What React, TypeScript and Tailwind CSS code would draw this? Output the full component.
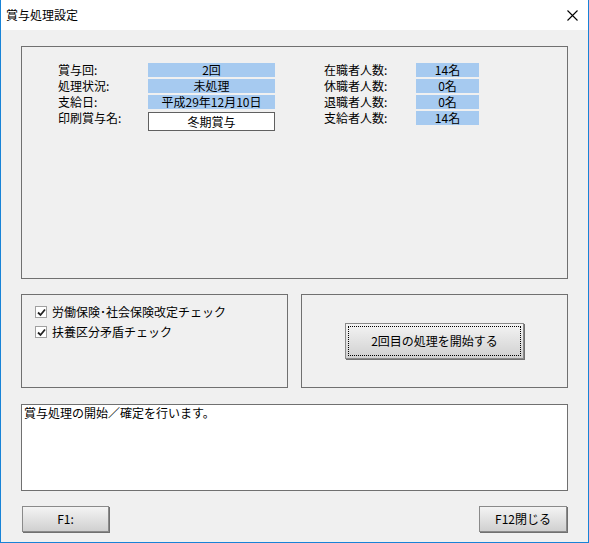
const font = { fontFamily: '"MS UI Gothic", "Noto Sans CJK JP", sans-serif' };

function Val({ children, w }: { children: React.ReactNode; w: string }) {
  return <div className={`${w} h-[14px] bg-[#a6caf0] text-center leading-[14px]`}>{children}</div>;
}

function Check({ label }: { label: string }) {
  return (
    <div className="flex items-center h-[20px]">
      <div className="w-[12px] h-[12px] border border-[#a0a0a0] bg-white flex items-center justify-center">
        <svg width="9" height="9" viewBox="0 0 9 9"><path d="M1 4.5 L3.5 7 L8 1.5" stroke="#222" strokeWidth="1.8" fill="none" /></svg>
      </div>
      <span className="ml-[5px]">{label}</span>
    </div>
  );
}

const btn = "border border-[#8a8a8a] bg-gradient-to-b from-[#f4f4f4] to-[#d0d0d0] shadow-[1px_1px_0_#707070] text-center";

export default function App() {
  const left = [["賞与回:", "2回"], ["処理状況:", "未処理"], ["支給日:", "平成29年12月10日"]];
  const right = [["在職者人数:", "14名"], ["休職者人数:", "0名"], ["退職者人数:", "0名"], ["支給者人数:", "14名"]];
  return (
    <div style={font} className="w-[589px] h-[543px] bg-[#f0f0f0] border-x border-b border-[#1883d7] text-[12px] leading-[14px] text-black flex flex-col overflow-hidden">
      <div className="h-[30px] bg-white flex items-center justify-between pl-[5px] pr-[10px] shrink-0">
        <span className="text-[12px]">賞与処理設定</span>
        <svg width="11" height="11" viewBox="0 0 11 11"><path d="M0.5 0.5 L10.5 10.5 M10.5 0.5 L0.5 10.5" stroke="#000" strokeWidth="1.1" /></svg>
      </div>
      <div className="px-[20px] pt-[16px]">
        <div className="h-[233px] border border-[#707070] flex pt-[16px]">
          <div className="ml-[36px] w-[90px] flex flex-col gap-[2px]">
            {[...left.map((l) => l[0]), "印刷賞与名:"].map((t) => <div key={t} className="h-[14px] leading-[14px]">{t}</div>)}
          </div>
          <div className="flex flex-col gap-[2px]">
            {left.map((l) => <Val key={l[0]} w="w-[127px]">{l[1]}</Val>)}
            <div className="w-[127px] h-[19px] border border-[#606060] bg-white text-center leading-[17px] mt-[1px]">冬期賞与</div>
          </div>
          <div className="ml-[49px] w-[92px] flex flex-col gap-[2px]">
            {right.map((r) => <div key={r[0]} className="h-[14px] leading-[14px]">{r[0]}</div>)}
          </div>
          <div className="flex flex-col gap-[2px]">
            {right.map((r) => <Val key={r[0]} w="w-[63px]">{r[1]}</Val>)}
          </div>
        </div>
        <div className="flex gap-[13px] mt-[15px]">
          <div className="w-[267px] h-[94px] border border-[#707070] pl-[13px] pt-[7px]">
            <Check label="労働保険･社会保険改定チェック" />
            <Check label="扶養区分矛盾チェック" />
          </div>
          <div className="flex-1 h-[94px] border border-[#707070] flex items-center justify-center">
            <div className={`${btn} w-[179px] h-[36px] leading-[34px] outline-1 outline-dotted outline-black -outline-offset-4`}>2回目の処理を開始する</div>
          </div>
        </div>
        <div className="mt-[16px] h-[87px] border border-[#707070] bg-white px-[2px] pt-[1px]">賞与処理の開始／確定を行います。</div>
        <div className="flex justify-between mt-[15px] px-[1px]">
          <div className={`${btn} w-[87px] h-[26px] leading-[24px]`}>F1:</div>
          <div className={`${btn} w-[88px] h-[26px] leading-[24px]`}>F12閉じる</div>
        </div>
      </div>
    </div>
  );
}
